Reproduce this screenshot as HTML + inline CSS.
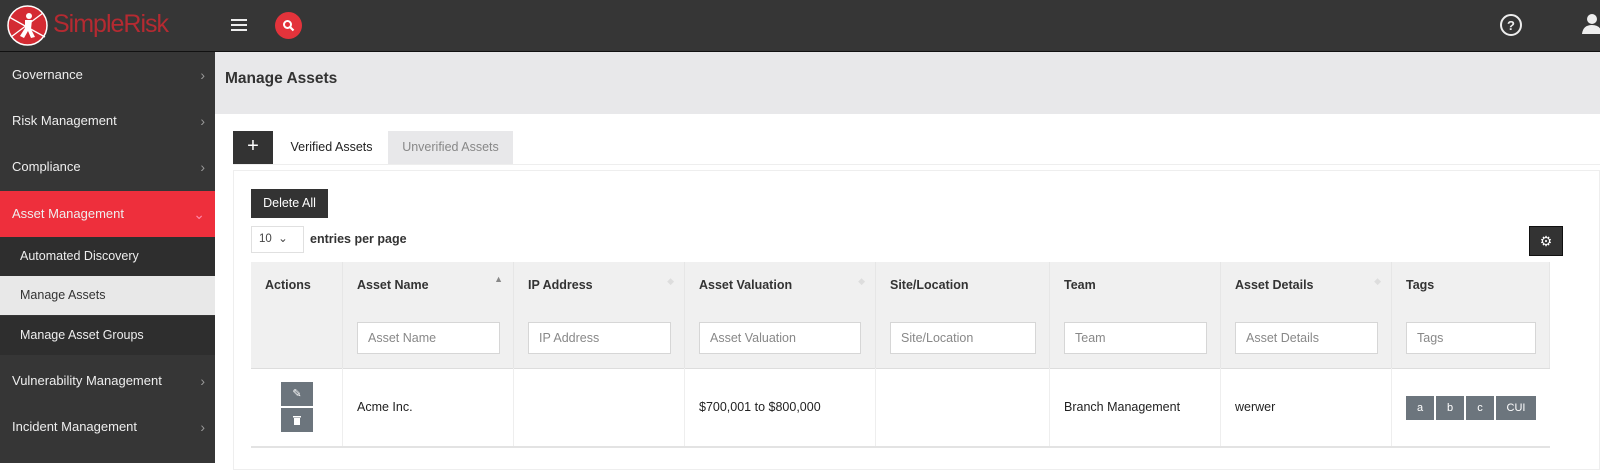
<!DOCTYPE html>
<html><head><style>
*{box-sizing:border-box;margin:0;padding:0}
body{width:1600px;height:463px;overflow:hidden;font-family:"Liberation Sans",sans-serif;background:#fff;position:relative;font-size:13px;color:#222}
.hdr{position:absolute;left:0;top:0;width:1600px;height:52px;background:#363636;border-bottom:1px solid #111}
.side{position:absolute;left:0;top:52px;width:215px;height:411px;background:#363636}
.it{position:absolute;left:0;width:215px;height:46px;color:#eee;font-size:13px;line-height:46px;padding-left:12px}
.it .ch{position:absolute;right:10px;top:0;color:#999;font-size:14px}
.sub{position:absolute;left:0;width:215px;height:39px;line-height:39px;padding-left:20px;background:#2e2e2e;color:#eee;font-size:12.5px}
.main{position:absolute;left:215px;top:52px;width:1385px;height:411px;background:#fff}
.band{position:absolute;left:0;top:0;width:1385px;height:62px;background:#e8e8ea;font-size:15.5px;font-weight:bold;color:#333;padding:18px 0 0 10px}
.th{position:absolute;top:262px;height:106px;background:#f0f0f0;border-right:1px solid #e6e6e6}
.th b{position:absolute;left:14px;top:16px;font-size:12.5px;color:#333}
.th input{position:absolute;left:14px;top:60px;height:32px;border:1px solid #d6d6d6;background:#fff;font-family:inherit;font-size:12.5px;color:#888;padding-left:10px}
.td{position:absolute;top:368px;height:78px;border-right:1px solid #eee;font-size:12.5px;line-height:78px;padding-left:14px}
.tag{display:inline-block;background:#6c757d;color:#fff;font-size:11px;height:24px;line-height:24px;text-align:center;margin-right:2px;vertical-align:top}
</style></head><body>
<div class="hdr">
<svg style="position:absolute;left:7px;top:5px" width="41" height="41" viewBox="0 0 41 41"><circle cx="20.5" cy="20.5" r="19.5" fill="#d42b33" stroke="#fff" stroke-width="1.5"/><path d="M2 12 L38 32 M4 32 L36 8" stroke="#fff" stroke-width="1.3"/><circle cx="22" cy="11" r="3" fill="#fff"/><path d="M18 15 L25 15 L24 24 L28 32 L24 33 L21 26 L17 33 L13 31 L18 23 Z" fill="#fff"/></svg>
<div style="position:absolute;left:53px;top:10px;color:#b52a31;font-size:25px;letter-spacing:-1px">SimpleRisk</div>
<div style="position:absolute;left:231px;top:19px;width:16px;height:2px;background:#eee;box-shadow:0 5px 0 #eee,0 10px 0 #eee"></div>
<div style="position:absolute;left:275px;top:12px;width:27px;height:27px;border-radius:50%;background:#e3333b"></div>
<svg style="position:absolute;left:282px;top:19px" width="13" height="13" viewBox="0 0 13 13"><circle cx="5.5" cy="5.5" r="3.5" fill="none" stroke="#fff" stroke-width="2"/><path d="M8 8 L11.5 11.5" stroke="#fff" stroke-width="2.2"/></svg>
<svg style="position:absolute;left:1499px;top:13px" width="24" height="24" viewBox="0 0 24 24"><circle cx="12" cy="12" r="10" fill="none" stroke="#eee" stroke-width="2"/><text x="12" y="17" fill="#eee" font-size="13" text-anchor="middle" font-family="Liberation Sans" font-weight="bold">?</text></svg>
<svg style="position:absolute;left:1582px;top:13px" width="18" height="22" viewBox="0 0 18 22"><circle cx="10" cy="6" r="5" fill="#eee"/><path d="M0 21 Q1 12 10 12 Q19 12 20 21 Z" fill="#eee"/></svg>
</div>
<div class="side">
<div class="it" style="top:0">Governance<span class="ch">›</span></div>
<div class="it" style="top:46px">Risk Management<span class="ch">›</span></div>
<div class="it" style="top:92px">Compliance<span class="ch">›</span></div>
<div class="it" style="top:139px;background:#ee2f3c">Asset Management<span class="ch" style="color:#f8a">⌄</span></div>
<div class="sub" style="top:185px">Automated Discovery</div>
<div class="sub" style="top:224px;background:#e8e8e8;color:#333">Manage Assets</div>
<div class="sub" style="top:264px">Manage Asset Groups</div>
<div class="it" style="top:306px">Vulnerability Management<span class="ch">›</span></div>
<div class="it" style="top:352px">Incident Management<span class="ch">›</span></div>
</div>
<div class="main"><div class="band">Manage Assets</div></div>
<div style="position:absolute;left:233px;top:131px;width:40px;height:33px;background:#333;color:#fff;font-size:20px;text-align:center;line-height:31px">+</div>
<div style="position:absolute;left:275px;top:131px;width:113px;height:33px;line-height:33px;text-align:center;font-size:12.5px;color:#222">Verified Assets</div>
<div style="position:absolute;left:388px;top:131px;width:125px;height:33px;line-height:33px;text-align:center;font-size:12.5px;color:#888;background:#e8e8ea">Unverified Assets</div>
<div style="position:absolute;left:233px;top:164px;width:1367px;height:1px;background:#eee"></div>
<div style="position:absolute;left:233px;top:170px;width:1367px;height:300px;border:1px solid #eee"></div>
<div style="position:absolute;left:251px;top:189px;width:77px;height:29px;background:#333;color:#fff;font-size:12.5px;line-height:29px;text-align:center">Delete All</div>
<div style="position:absolute;left:251px;top:226px;width:53px;height:27px;border:1px solid #e0e0e0;font-size:11.5px;line-height:25px;padding-left:7px;color:#444">10 &nbsp;⌄</div>
<div style="position:absolute;left:310px;top:232px;font-size:12.5px;font-weight:bold;color:#333">entries per page</div>
<div style="position:absolute;left:1529px;top:226px;width:34px;height:30px;background:#333;border:1px solid #111;color:#fff;text-align:center;line-height:28px;font-size:14px">⚙</div>
<div class="th" style="left:251px;width:92px"><b>Actions</b></div>
<div class="th" style="left:343px;width:171px"><b>Asset Name</b><span style="position:absolute;right:10px;top:12px;font-size:9px;color:#888">▲</span><input style="width:143px" value="Asset Name"></div>
<div class="th" style="left:514px;width:171px"><b>IP Address</b><span style="position:absolute;right:10px;top:14px;font-size:9px;color:#ddd">◆</span><input style="width:143px" value="IP Address"></div>
<div class="th" style="left:685px;width:191px"><b>Asset Valuation</b><span style="position:absolute;right:10px;top:14px;font-size:9px;color:#ddd">◆</span><input style="width:162px" value="Asset Valuation"></div>
<div class="th" style="left:876px;width:174px"><b>Site/Location</b><input style="width:146px" value="Site/Location"></div>
<div class="th" style="left:1050px;width:171px"><b>Team</b><input style="width:143px" value="Team"></div>
<div class="th" style="left:1221px;width:171px"><b>Asset Details</b><span style="position:absolute;right:10px;top:14px;font-size:9px;color:#ddd">◆</span><input style="width:143px" value="Asset Details"></div>
<div class="th" style="left:1392px;width:158px"><b>Tags</b><input style="width:130px" value="Tags"></div>
<div style="position:absolute;left:251px;top:368px;width:1299px;height:1px;background:#ddd"></div>
<div class="td" style="left:251px;width:92px"></div>
<div style="position:absolute;left:281px;top:382px;width:32px;height:24px;background:#6c757d;color:#fff;text-align:center;line-height:24px;font-size:11px">✎</div>
<div style="position:absolute;left:281px;top:408px;width:32px;height:24px;background:#6c757d"><svg width="32" height="24"><path d="M12 8h8v1.5h-8z M13 10h6v7h-6z" fill="#fff"/></svg></div>
<div class="td" style="left:343px;width:171px">Acme Inc.</div>
<div class="td" style="left:514px;width:171px"></div>
<div class="td" style="left:685px;width:191px">$700,001 to $800,000</div>
<div class="td" style="left:876px;width:174px"></div>
<div class="td" style="left:1050px;width:171px">Branch Management</div>
<div class="td" style="left:1221px;width:171px">werwer</div>
<div class="td" style="left:1392px;width:158px;border-right:none;line-height:normal;padding-top:28px"><span class="tag" style="width:28px">a</span><span class="tag" style="width:28px">b</span><span class="tag" style="width:28px">c</span><span class="tag" style="width:40px">CUI</span></div>
<div style="position:absolute;left:251px;top:446px;width:1299px;height:2px;background:#e3e3e3"></div>
</body></html>
